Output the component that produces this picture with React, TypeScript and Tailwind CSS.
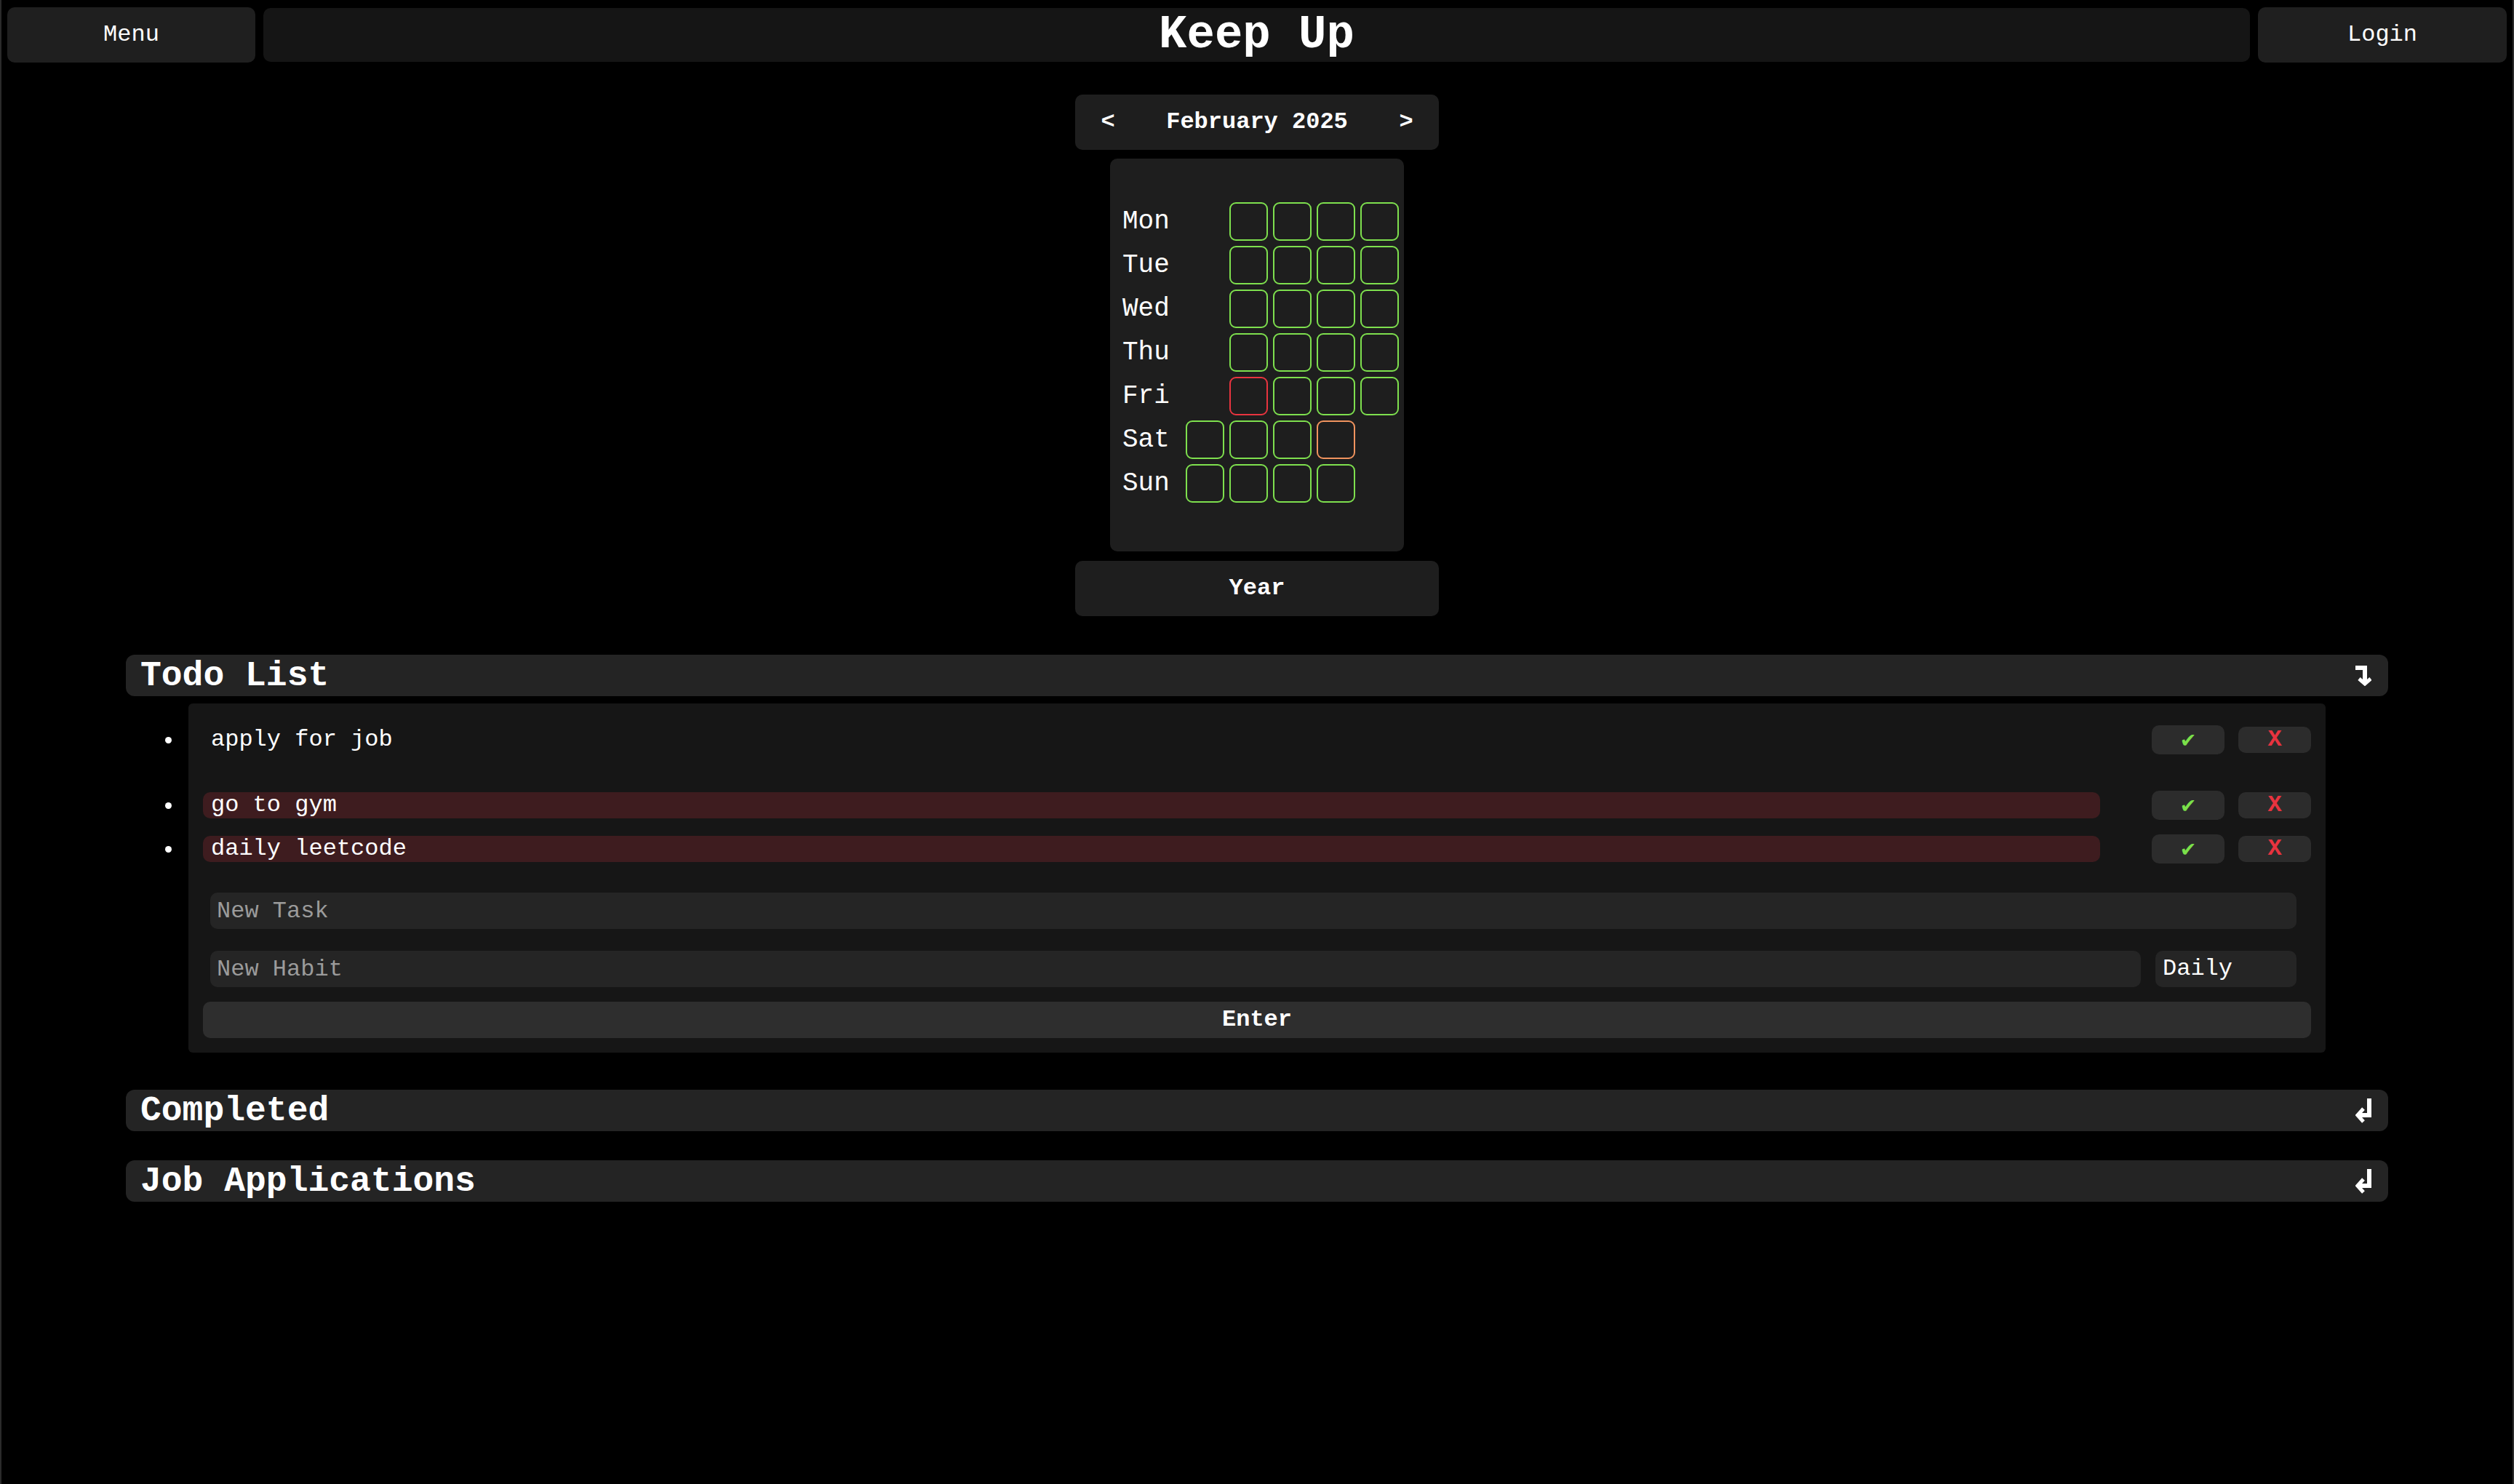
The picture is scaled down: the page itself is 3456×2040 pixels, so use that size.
const days = ["Mon", "Tue", "Wed", "Thu", "Fri", "Sat", "Sun"];

// February 2025 starts on a Saturday, so weekdays begin in the 2nd week column
function cellClass(row: number, col: number) {
  const weekend = row >= 5;
  if (weekend && col === 4) return "";
  if (!weekend && col === 0) return "";
  if (row === 4 && col === 1) return "border-[#e8343f]";
  if (row === 5 && col === 3) return "border-[#f0935e]";
  return "border-[#7ee04e]";
}

type Item = { name: string; habit: boolean };

const items: Item[] = [
  { name: "apply for job", habit: false },
  { name: "go to gym", habit: true },
  { name: "daily leetcode", habit: true },
];

function ArrowDownCorner() {
  return (
    <svg width="22" height="28" viewBox="0 0 22 28" fill="none">
      <path d="M0 3H13V24" stroke="white" strokeWidth="6" />
      <path d="M5 18L13 25L21 18" stroke="white" strokeWidth="5" />
    </svg>
  );
}

function ArrowLeftCorner() {
  return (
    <svg width="22" height="34" viewBox="0 0 22 34" fill="none">
      <path d="M19 0V23H4" stroke="white" strokeWidth="6" />
      <path d="M11 14L3 23L11 32" stroke="white" strokeWidth="5" />
    </svg>
  );
}

function TaskRow({ item }: { item: Item }) {
  return (
    <li className="flex items-center ml-[20px] mr-[20px] h-[40px]">
      <span className="-ml-[52px] mr-[43px] w-[9px] h-[9px] rounded-full bg-white shrink-0" />
      <div
        className={
          item.habit
            ? "flex-1 h-[36px] rounded-[10px] pl-[11px] flex items-center bg-[#3e1c1f]"
            : "flex-1 h-[36px] rounded-[10px] pl-[11px] flex items-center"
        }
      >
        {item.name}
      </div>
      <button className="ml-[71px] w-[100px] h-[40px] rounded-[10px] bg-[#2c2c2c] flex items-center justify-center text-[27px] leading-none text-[#7be04a] font-['DejaVu_Sans',sans-serif]">
        ✔
      </button>
      <button className="ml-[19px] w-[100px] h-[36px] rounded-[10px] bg-[#2c2c2c] flex items-center justify-center font-bold text-[#e8333f]">
        X
      </button>
    </li>
  );
}

function SectionHeader({ title, open }: { title: string; open?: boolean }) {
  return (
    <div className="flex items-center justify-between h-[57px] rounded-[12px] bg-[#242424] pl-[20px] pr-[23px]">
      <span className="text-[48px] font-bold leading-none">{title}</span>
      {open ? <ArrowDownCorner /> : <ArrowLeftCorner />}
    </div>
  );
}

export default function App() {
  return (
    <div className="min-h-screen bg-black border-x-2 border-[#2b2b2b] text-white text-[32px] font-['Liberation_Mono','Courier_New',monospace]">
      {/* top bar */}
      <div className="flex items-center gap-[11px] px-[8px] pt-[10px]">
        <button className="w-[341px] h-[76px] rounded-[10px] bg-[#1f1f1f]">Menu</button>
        <div className="flex-1 h-[74px] rounded-[10px] bg-[#151515] flex items-center justify-center">
          <h1 className="text-[64px] font-bold leading-none">Keep Up</h1>
        </div>
        <button className="w-[342px] h-[76px] rounded-[10px] bg-[#1f1f1f]">Login</button>
      </div>

      {/* calendar */}
      <div className="flex flex-col items-center">
        <div className="mt-[44px] w-[500px] h-[76px] rounded-[10px] bg-[#1e1e1e] flex items-center justify-between px-[35px] font-bold">
          <span className="w-[20px] text-center">&lt;</span>
          <span>February 2025</span>
          <span className="w-[20px] text-center">&gt;</span>
        </div>
        <div className="mt-[12px] w-[404px] rounded-[10px] bg-[#1e1e1e] pl-[17px] pt-[60px] pb-[67px] flex flex-col gap-[7px]">
          {days.map((d, row) => (
            <div key={d} className="flex items-center">
              <span className="w-[87px] text-[36px] leading-none">{d}</span>
              <div className="grid grid-cols-5 gap-[7px]">
                {[0, 1, 2, 3, 4].map((col) => {
                  const c = cellClass(row, col);
                  return c ? (
                    <div key={col} className={`w-[53px] h-[53px] rounded-[9px] border-2 ${c}`} />
                  ) : (
                    <div key={col} className="w-[53px] h-[53px]" />
                  );
                })}
              </div>
            </div>
          ))}
        </div>
        <button className="mt-[13px] w-[500px] h-[76px] rounded-[10px] bg-[#1e1e1e] font-bold">Year</button>
      </div>

      {/* lists */}
      <div className="mx-[171px] mt-[53px]">
        <SectionHeader title="Todo List" open />
        <div className="mx-[86px] mt-[10px] rounded-[6px] bg-[#161616] pt-[30px] pb-[20px]">
          <ul>
            <TaskRow item={items[0]} />
          </ul>
          <ul className="mt-[50px] flex flex-col gap-[20px]">
            <TaskRow item={items[1]} />
            <TaskRow item={items[2]} />
          </ul>
          <input
            placeholder="New Task"
            className="mt-[40px] ml-[30px] block w-[calc(100%-70px)] h-[50px] rounded-[10px] bg-[#252525] px-[9px] outline-none placeholder:text-[#9b9b9b]"
          />
          <div className="mt-[30px] ml-[30px] mr-[40px] flex gap-[20px]">
            <input
              placeholder="New Habit"
              className="flex-1 h-[50px] rounded-[10px] bg-[#252525] px-[9px] outline-none placeholder:text-[#9b9b9b]"
            />
            <select className="w-[194px] h-[50px] rounded-[10px] bg-[#252525] px-[10px] appearance-none outline-none">
              <option>Daily</option>
              <option>Weekly</option>
            </select>
          </div>
          <button className="mt-[20px] mx-[20px] block w-[calc(100%-40px)] h-[50px] rounded-[10px] bg-[#2e2e2e] font-bold">
            Enter
          </button>
        </div>

        <div className="mt-[51px]">
          <SectionHeader title="Completed" />
        </div>
        <div className="mt-[40px]">
          <SectionHeader title="Job Applications" />
        </div>
      </div>
    </div>
  );
}
